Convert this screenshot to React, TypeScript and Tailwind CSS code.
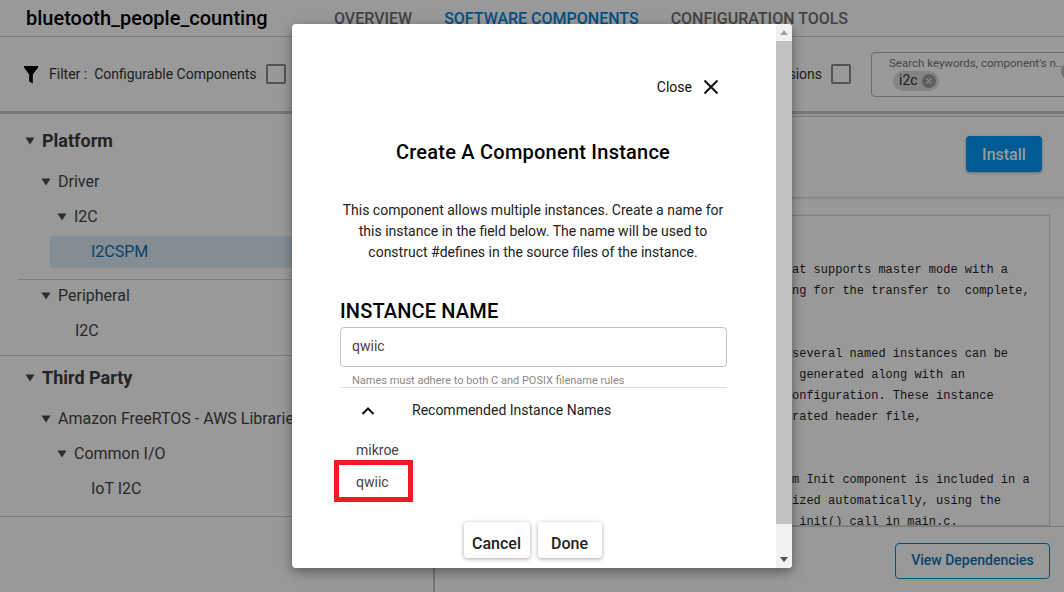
const docLines = [
  'at supports master mode with a',
  'ng for the transfer to  complete,',
  '',
  '',
  'several named instances can be',
  ' generated along with an',
  'onfiguration. These instance',
  'rated header file,',
  '',
  '',
  'm Init component is included in a',
  'ized automatically, using the',
  ' init() call in main.c.',
];

function Caret({ className }: { className?: string }) {
  return (
    <svg width="10" height="8" viewBox="0 0 10 8" className={className}>
      <path d="M0.5 0.5H9.5L5 7.5Z" fill="#4a4a4a" />
    </svg>
  );
}

function TreeRow({
  label,
  indent,
  caret,
  bold,
  selected,
}: {
  label: string;
  indent: string;
  caret?: boolean;
  bold?: boolean;
  selected?: boolean;
}) {
  return (
    <div className={`flex items-center whitespace-nowrap ${selected ? 'h-[32px] pb-[1px]' : 'h-[35px]'} ${indent}`}>
      {caret && <Caret className="mr-[7px] shrink-0" />}
      <span
        className={
          bold
            ? 'text-[18px] font-bold text-[#3c3c3c]'
            : selected
              ? 'text-[16px] text-[#0b6fb0]'
              : 'text-[16px] text-[#444444]'
        }
      >
        {label}
      </span>
    </div>
  );
}

export default function App() {
  return (
    <div className="relative h-[592px] w-[1064px] overflow-hidden bg-white font-[Roboto,sans-serif] text-black">
      {/* Header */}
      <header className="flex h-[37px] items-center border-b border-[#d0d0d0]">
        <h1 className="ml-[26px] w-[308px] text-[20px] font-medium">bluetooth_people_counting</h1>
        <nav className="flex gap-[32px] pt-[1px] text-[16px] font-medium text-[#707070]">
          <span>OVERVIEW</span>
          <span className="text-[#0086d9]">SOFTWARE COMPONENTS</span>
          <span>CONFIGURATION TOOLS</span>
        </nav>
      </header>

      {/* Filter bar */}
      <div className="flex h-[77px] items-center border-b-[3px] border-[#c8c8c8]">
        <svg width="14" height="18" viewBox="0 0 14 18" className="ml-[24px] mt-[1px]">
          <path d="M0 0H14V1.5L8.8 8.5V17.5L5.2 15.5V8.5L0 1.5Z" fill="#000" />
        </svg>
        <span className="ml-[11px] text-[14px] text-[#333333]">Filter :</span>
        <span className="ml-[7px] text-[14px] text-[#333333]">Configurable Components</span>
        <div className="ml-[9px] h-[20px] w-[20px] rounded-[2px] border-2 border-[#8a8a8a]" />
        <span className="ml-auto text-[14px] text-[#333333]">Latest Versions</span>
        <div className="ml-[9px] h-[20px] w-[20px] rounded-[2px] border-2 border-[#8a8a8a]" />
        <div className="-mr-[30px] ml-[20px] flex h-[45px] w-[223px] shrink-0 rounded-[4px] border border-[#b4b4b4] pl-[17px] pt-[3px]">
          <div className="flex w-[172px] shrink-0 flex-col">
            <span className="whitespace-nowrap text-[11.5px] leading-[14px] text-[#777777]">
              Search keywords, component's n...
            </span>
            <div className="ml-[4px] mt-[1px] flex h-[20px] w-[46px] items-center rounded-full bg-[#dcdcdc] pl-[6px] text-[14px] text-[#333333]">
              i2c
              <svg width="14" height="14" viewBox="0 0 14 14" className="ml-[4px]">
                <circle cx="7" cy="7" r="7" fill="#9e9e9e" />
                <path d="M4.5 4.5L9.5 9.5M9.5 4.5L4.5 9.5" stroke="#dcdcdc" strokeWidth="1.6" />
              </svg>
            </div>
          </div>
          <div className="mt-[7px] h-[17px] w-[17px] shrink-0 rounded-full bg-[#bdbdbd]" />
        </div>
      </div>

      {/* Body */}
      <div className="flex h-[478px]">
        <aside className="w-[435px] shrink-0 border-r-2 border-[#c4c4c4]">
          <div className="pl-[25px] pt-[9px]">
            <TreeRow label="Platform" indent="" caret bold />
          </div>
          <div className="mt-[6px] ml-[18px] border-b border-[#d0d0d0] pb-[11px] pl-[23px]">
            <TreeRow label="Driver" indent="" caret />
            <TreeRow label="I2C" indent="pl-[16px]" caret />
            <div className="ml-[9px] mt-[2px] bg-[#dcebf5] pl-[41px]">
              <TreeRow label="I2CSPM" indent="" selected />
            </div>
          </div>
          <div className="-mt-[2px] border-b border-[#d0d0d0] pb-[7px] pl-[41px]">
            <TreeRow label="Peripheral" indent="" caret />
            <TreeRow label="I2C" indent="pl-[34px]" />
          </div>
          <div className="pl-[25px] pt-[4px]">
            <TreeRow label="Third Party" indent="" caret bold />
          </div>
          <div className="mt-[6px] border-b border-[#d0d0d0] pb-[10px] pl-[41px]">
            <TreeRow label="Amazon FreeRTOS - AWS Libraries" indent="" caret />
            <TreeRow label="Common I/O" indent="pl-[16px]" caret />
            <TreeRow label="IoT I2C" indent="pl-[50px]" />
          </div>
        </aside>

        <main className="flex min-w-0 flex-1 flex-col">
          <div className="mt-[2px] flex h-[81px] shrink-0 items-center justify-end border-t border-[#d4d4d4] pb-[6px] pr-[22px] shadow-[0_1px_3px_rgba(0,0,0,0.2)]">
            <button className="h-[36px] w-[76px] rounded-[4px] bg-[#0097f5] pt-[1px] text-[16px] font-medium text-white shadow-[0_1px_3px_rgba(0,0,0,0.3)]">
              Install
            </button>
          </div>
          <div className="ml-[14px] mr-[14px] mt-[18px] flex-1 overflow-hidden border border-[#d8d8d8] pl-[342px] pt-[44px] shadow-[0_0_2px_rgba(0,0,0,0.15)]">
            {docLines.map((line, i) => (
              <div
                key={i}
                className="h-[21px] whitespace-pre font-['Liberation_Mono',monospace] text-[12px] leading-[21px] text-[#1f1f1f]"
              >
                {line}
              </div>
            ))}
          </div>
          <div className="flex h-[66px] shrink-0 items-center justify-end border-t border-[#cfcfcf] pr-[14px] pt-[3px]">
            <button className="h-[36px] w-[155px] rounded-[4px] border border-[#0086d9] pb-[2px] text-[14px] font-medium text-[#0a72b8]">
              View Dependencies
            </button>
          </div>
        </main>
      </div>

      {/* Dialog backdrop */}
      <div className="absolute inset-0 bg-black/40" />

      {/* Dialog */}
      <div className="absolute left-[292px] top-[24px] flex h-[544px] w-[500px] overflow-hidden rounded-[4px] bg-white shadow-[0_4px_12px_rgba(0,0,0,0.4)]">
        <div className="w-[484px] shrink-0 px-[48px] pt-[51px]">
          <div className="flex h-[24px] items-center justify-end pr-[9px] text-[14px] text-[#111111]">
            Close
            <svg width="16" height="16" viewBox="0 0 16 16" className="ml-[11px]">
              <path d="M1.5 1.5L14.5 14.5M14.5 1.5L1.5 14.5" stroke="#111" strokeWidth="2" />
            </svg>
          </div>
          <h2 className="mt-[39px] pr-[2px] text-center text-[20px] font-medium leading-[28px] tracking-[0.23px]">
            Create A Component Instance
          </h2>
          <p className="mt-[34px] pr-[2px] text-center text-[14px] leading-[21px] text-[#222222]">
            This component allows multiple instances. Create a name for
            <br />
            this instance in the field below. The name will be used to
            <br />
            construct #defines in the source files of the instance.
          </p>
          <div className="mt-[36px] text-[20px] font-medium leading-[24px] tracking-[0.15px]">INSTANCE NAME</div>
          <div className="mt-[4px] flex h-[40px] w-[387px] items-center rounded-[4px] border border-[#c4c4c4] pb-[1px] pl-[11px] text-[14px] text-[#444444]">
            qwiic
          </div>
          <div className="mt-[7px] h-[13px] pl-[12px] text-[11px] leading-[14px] text-[#8a8a8a]">
            Names must adhere to both C and POSIX filename rules
          </div>
          <div className="flex h-[44px] w-[387px] items-center border-t border-[#e0e0e0] pt-[1px] text-[14px] text-[#222222]">
            <svg width="14" height="10" viewBox="0 0 14 10" className="ml-[21px] mt-[1px]">
              <path d="M1.5 8L7 2.5L12.5 8" fill="none" stroke="#111" strokeWidth="2" />
            </svg>
            <span className="ml-[37px]">Recommended Instance Names</span>
          </div>
          <div className="ml-[16px] mt-[9px] h-[20px] text-[14px] leading-[20px] text-[#444444]">mikroe</div>
          <div className="-ml-[6px] flex h-[42px] w-[79px] items-center border-[5px] border-[#ed1c24] pl-[17px] pt-[3px] text-[14px] text-[#444444]">
            qwiic
          </div>
          <div className="mt-[20px] flex justify-center gap-[8px] pr-[3px]">
            <button className="h-[36px] w-[66px] rounded-[4px] bg-white pt-[8px] text-[16px] font-medium text-[#222222] shadow-[0_1px_4px_rgba(0,0,0,0.35)]">
              Cancel
            </button>
            <button className="h-[36px] w-[64px] rounded-[4px] bg-white pt-[8px] text-[16px] font-medium text-[#222222] shadow-[0_1px_4px_rgba(0,0,0,0.35)]">
              Done
            </button>
          </div>
        </div>

        {/* Scrollbar */}
        <div className="flex w-[16px] shrink-0 flex-col items-center bg-[#f1f1f1]">
          <svg width="8" height="5" viewBox="0 0 8 5" className="mt-[6px] shrink-0">
            <path d="M0 5H8L4 0Z" fill="#a3a3a3" />
          </svg>
          <div className="mt-[6px] h-[483px] w-full bg-[#c1c1c1]" />
          <div className="flex-1" />
          <svg width="8" height="5" viewBox="0 0 8 5" className="mb-[6px] shrink-0">
            <path d="M0 0H8L4 5Z" fill="#505050" />
          </svg>
        </div>
      </div>
    </div>
  );
}
